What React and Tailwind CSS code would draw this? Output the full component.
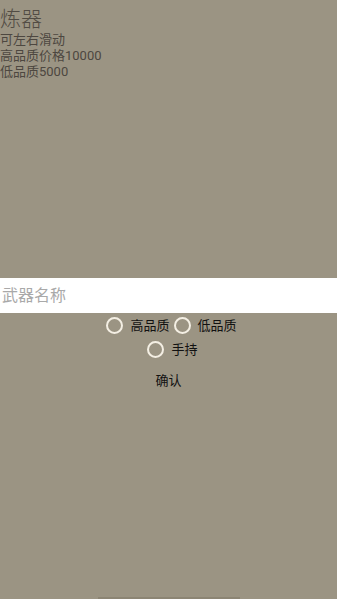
import React from 'react';

function Radio({ label }) {
  return (
    <label className="flex items-center">
      <span className="w-[17px] h-[17px] rounded-full border-2 border-[#f4efe4] mr-[7px]"></span>
      <span className="text-[13px] leading-[16px] text-[#111]">{label}</span>
    </label>
  );
}

export default function App() {
  return (
    <div className="w-[337px] h-[599px] bg-[#9b9483] flex flex-col overflow-hidden" style={{ fontFamily: 'Roboto, "Noto Sans CJK SC", sans-serif' }}>
      {/* header text */}
      <div className="h-[278px] pt-[7px] text-[#4d4740]">
        <h1 className="text-[21px] leading-[25px] font-light text-[#524c44]">炼器</h1>
        <p className="text-[13px] leading-[16px]">可左右滑动</p>
        <p className="text-[13px] leading-[16px]">高品质价格10000</p>
        <p className="text-[13px] leading-[16px]">低品质5000</p>
      </div>

      <input
        className="w-full h-[35px] bg-white px-[2px] text-[16px] text-[#333] placeholder:text-[#a9a9a9] outline-none"
        placeholder="武器名称"
      />

      <div className="flex justify-center gap-[4px] mt-[4px] pl-[6px]">
        <Radio label="高品质" />
        <Radio label="低品质" />
      </div>
      <div className="flex justify-center mt-[7px] pl-[8px]">
        <Radio label="手持" />
      </div>

      <button className="self-center mt-[15px] text-[13px] leading-[16px] text-[#111]">确认</button>

      <div className="mt-auto mx-auto w-[142px] h-[2px] bg-[#8c8574]"></div>
    </div>
  );
}
